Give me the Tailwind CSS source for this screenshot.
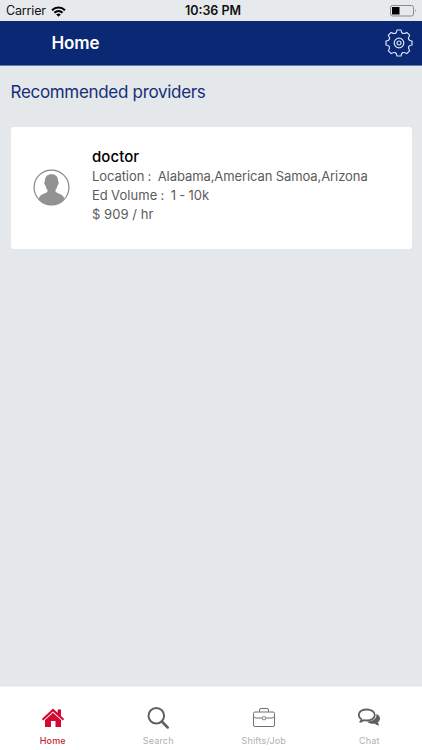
<!DOCTYPE html>
<html lang="en">
<head>
<meta charset="utf-8">
<title>Home</title>
<script src="https://cdn.jsdelivr.net/npm/@tailwindcss/browser@4"></script>
</head>
<body class="flex h-[750px] w-[422px] flex-col overflow-hidden bg-[#e4e8eb] font-['Inter','Liberation_Sans',sans-serif]">
  <div class="grid h-[21px] shrink-0 grid-cols-3 items-center bg-[#e6eaed] pt-px pr-[5px] pl-[6px] text-[12.5px] leading-5 text-[#111]">
    <div class="flex items-center gap-[5px]">
      <span class="tracking-[-0.15px]">Carrier</span>
      <svg class="h-[11px] w-[15px]" viewBox="0 0 15 11" fill="none" stroke="#000" stroke-width="2">
        <path d="M1 4.3C4.7.7 10.3.7 14 4.3"/><path d="M3.4 6.8C5.8 4.5 9.2 4.5 11.6 6.8"/><path d="M5.2 8.5Q7.5 6.5 9.8 8.5L7.5 10.8Z" fill="#000" stroke="none"/>
      </svg>
    </div>
    <span class="pl-[3px] text-center text-[12.5px] font-semibold tracking-[0px]">10:36 PM</span>
    <svg class="h-3 w-[27px] justify-self-end" viewBox="0 0 27 12">
      <rect x=".5" y=".5" width="23" height="10.5" rx="2" fill="none" stroke="#888b8e"/>
      <rect x="2" y="2" width="7.5" height="7.5" fill="#000"/>
      <path d="M25 4Q26.6 5.7 25 7.5Z" fill="#888b8e"/>
    </svg>
  </div>
  <header class="flex h-[45px] shrink-0 items-center justify-between border-b border-[#6d7fa9] bg-[#0a2873] pr-[9px] pl-[51.5px]">
    <h1 class="pt-[2px] text-[17px] font-semibold tracking-[-0.1px] text-white">Home</h1>
    <svg class="size-7" viewBox="-14 -14 28 28" fill="none" stroke="#dce5f7" stroke-width="1.2" stroke-linejoin="round">
      <path d="M-2 -13L2 -13C2.5 -9.2 4.3 -8.6 7.8 -10.6L10.6 -7.8C8.6 -4.3 9.2 -2.5 13 -2L13 2C9.2 2.5 8.6 4.3 10.6 7.8L7.8 10.6C4.3 8.6 2.5 9.2 2 13L-2 13C-2.5 9.2 -4.3 8.6 -7.8 10.6L-10.6 7.8C-8.6 4.3 -9.2 2.5 -13 2L-13 -2C-9.2 -2.5 -8.6 -4.3 -10.6 -7.8L-7.8 -10.6C-4.3 -8.6 -2.5 -9.2 -2 -13Z"/>
      <circle r="4.8"/><circle r="2"/>
    </svg>
  </header>
  <main class="flex-1 px-[10.5px] pt-[14px]">
    <h2 class="text-[17px] leading-6 tracking-[-0.31px] text-[#152f76]">Recommended providers</h2>
    <article class="mt-[22.5px] flex h-[122px] items-center rounded-[3px] bg-white pl-[22px]">
      <svg class="size-[37px] shrink-0" viewBox="0 0 37 37">
        <defs><clipPath id="avatar"><circle cx="18.5" cy="18.5" r="17.2"/></clipPath></defs>
        <path clip-path="url(#avatar)" fill="#929292" d="M18.5 5.2C22.9 5.2 25.3 8 25.1 12.5C26.2 12.7 25.8 15.8 24.5 16.4C24.1 18.7 23.3 19.9 22.5 20.8V22.5C24 25 31 24.5 31.5 31V37H5.5V31C6 24.5 13 25 14.5 22.5V20.8C13.7 19.9 12.9 18.7 12.5 16.4C11.2 15.8 10.8 12.7 11.9 12.5C11.7 8 14.1 5.2 18.5 5.2Z"/>
        <circle cx="18.5" cy="18.5" r="17.4" fill="none" stroke="#888" stroke-width="1.2"/>
      </svg>
      <div class="ml-[22.5px] pb-[4px] text-[13px] leading-[19px] text-[#5b5b5b]">
        <h3 class="h-[20px] text-[15px] leading-[20px] font-medium tracking-[0.05px] text-black">doctor</h3>
        <p class="tracking-[-0.08px] whitespace-pre [word-spacing:-0.3px]">Location :  Alabama,American Samoa,Arizona</p>
        <p class="tracking-[0.05px] whitespace-pre [word-spacing:-0.5px]">Ed Volume :  1 - 10k</p>
        <p class="tracking-[0.05px] whitespace-pre">$ 909 / hr</p>
      </div>
    </article>
  </main>
  <nav class="grid h-16 shrink-0 grid-cols-4 border-t border-[#eef0f2] bg-white pt-[19px] text-[9px] leading-3 text-[#b0b0b0]">
    <a class="flex flex-col items-center gap-[5px] font-medium text-[#c41f36]">
      <svg class="h-6 w-6" viewBox="0 0 24 24" fill="#d20a32">
        <path d="M12 2.5L16.6 6.8V3.5H20V10L23.2 13L21.8 14.5L12 5.6L2.2 14.5L.8 13Z"/><path d="M12 6.8L20 14V21H14.5V15H10V21H4V14Z"/>
      </svg>
      <span class="tracking-[0.2px]">Home</span>
    </a>
    <a class="flex flex-col items-center gap-[5px]">
      <svg class="h-6 w-6" viewBox="0 0 24 24" fill="none" stroke="#606060">
        <circle cx="10.3" cy="9.7" r="7.8" stroke-width="2"/><path d="M15.8 15.5L21.7 21.5" stroke-width="2.5" stroke-linecap="round"/>
      </svg>
      <span class="tracking-[0.15px]">Search</span>
    </a>
    <a class="flex flex-col items-center gap-[5px]">
      <svg class="h-6 w-6" viewBox="0 0 24 24" fill="none" stroke="#707070" stroke-width="1">
        <rect x="1.5" y="6" width="21" height="14.5" rx="1.5"/><path d="M7.5 6V4Q7.5 2.5 9 2.5H15Q16.5 2.5 16.5 4V6M2 10.5Q2.5 12 4 12H10M14 12H20Q21.5 12 22 10.5"/><rect x="10.3" y="10.7" width="3.4" height="3" rx="1"/>
      </svg>
      <span class="tracking-[0.2px]">Shifts/Job</span>
    </a>
    <a class="flex flex-col items-center gap-[5px]">
      <svg class="h-6 w-6" viewBox="0 0 24 24">
        <path d="M19.4 7.8C23.9 10 24 14 21 16.2Q21.2 18 22.5 19.5Q19.3 19.2 17.8 17.7C14.8 18.1 12.1 17.4 10.3 15.7C16 15.2 20.2 12.5 19.4 7.8Z" fill="#606060"/>
        <path d="M9.7 3.5C14.3 3.5 17.8 5.9 17.8 9C17.8 12.2 14.2 14.5 9.7 14.5Q8.2 14.5 6.8 14.2Q5.3 15.7 3.2 15.9Q4.4 14.7 4.5 13.2C0 10.7 1 3.5 9.7 3.5Z" fill="#fff" stroke="#606060" stroke-width="1.8" stroke-linejoin="round"/>
      </svg>
      <span class="tracking-[0.2px]">Chat</span>
    </a>
  </nav>
</body>
</html>
